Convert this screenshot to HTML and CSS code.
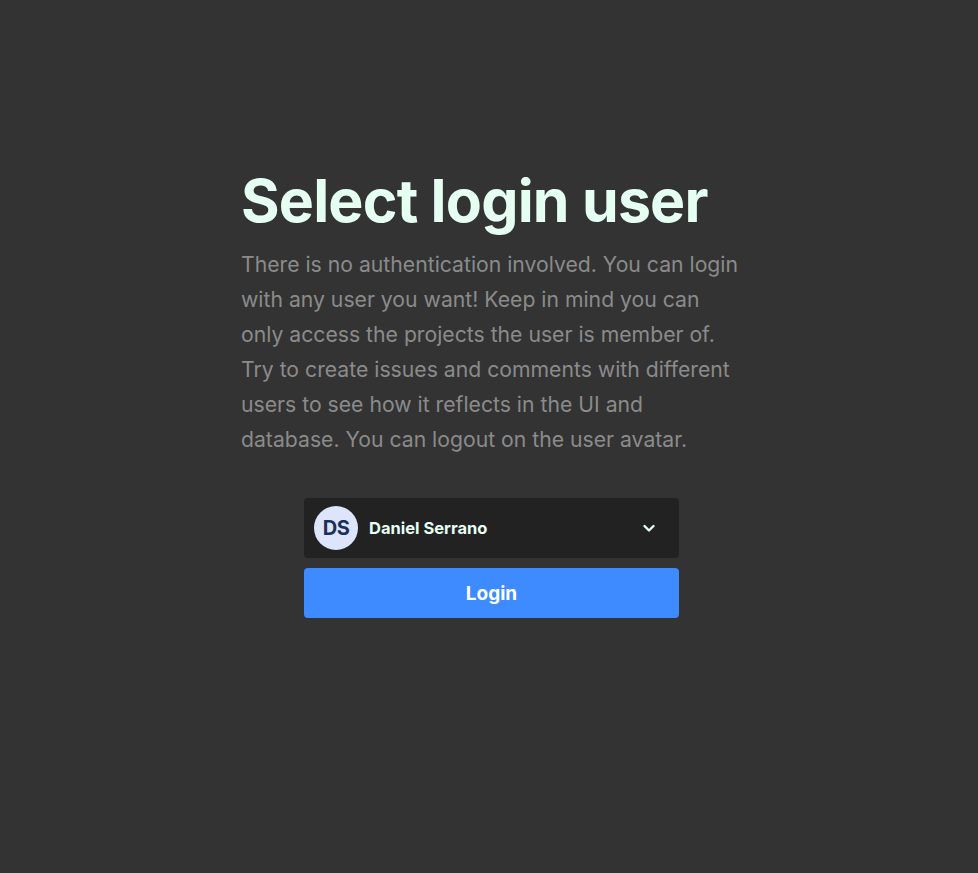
FILE: index.html
```html
<!DOCTYPE html>
<html>
<head>
<meta charset="utf-8">
<link rel="stylesheet" href="styles.css">
</head>
<body>
<main class="page">
  <section class="card">
    <h1 class="title">Select login user</h1>
    <p class="desc">There is no authentication involved. You can login with any user you want! Keep in mind you can only access the projects the user is member of. Try to create issues and comments with different users to see how it reflects in the UI and database. You can logout on the user avatar.</p>
    <div class="form">
      <div class="select">
        <div class="avatar">DS</div>
        <span class="name">Daniel Serrano</span>
        <svg class="chev" width="16" height="16" viewBox="0 0 16 16"><path d="M3.5 6 L8 10.5 L12.5 6" fill="none" stroke="#e6fff5" stroke-width="2.4" stroke-linecap="round" stroke-linejoin="round"/></svg>
      </div>
      <button class="login">Login</button>
    </div>
  </section>
</main>
</body>
</html>
```
FILE: styles.css
```css
html, body { margin: 0; padding: 0; background: #333333; }
body { font-family: Inter, "Noto Sans", sans-serif; }
.page { display: flex; justify-content: center; padding-top: 165px; }
.card { width: 502px; margin-left: 6px; display: flex; flex-direction: column; }
.title { margin: 0; font-size: 59px; font-weight: 700; color: #e6fff3; letter-spacing: -0.8px; line-height: 72px; }
.desc { margin: 10px 0 0; font-size: 21.2px; line-height: 35px; color: #8b8b8b; }
.form { display: flex; flex-direction: column; gap: 10px; width: 375px; margin: 41px 0 0 63px; }
.select { height: 60px; background: #222222; border-radius: 4px; display: flex; align-items: center; padding: 0 10px; box-sizing: border-box; }
.avatar { width: 44px; height: 44px; border-radius: 50%; background: #dde4fb; color: #17305a; font-weight: 700; font-size: 20px; letter-spacing: -0.5px; display: flex; align-items: center; justify-content: center; }
.name { margin-left: 11px; color: #e6fff5; font-weight: 700; font-size: 16.5px; flex: 1; }
.chev { margin-right: 12px; }
.login { height: 50px; border: 0; border-radius: 4px; background: #3d8bff; color: #ffffff; font-family: inherit; font-weight: 700; font-size: 19px; }
```
